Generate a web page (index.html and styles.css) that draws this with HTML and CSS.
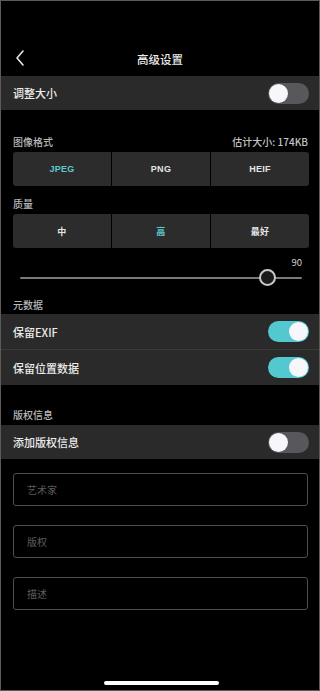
FILE: index.html
```html
<!DOCTYPE html>
<html lang="zh">
<head>
<meta charset="utf-8">
<link rel="stylesheet" href="styles.css">
</head>
<body>
<div class="screen">
  <div class="status"></div>
  <div class="nav">
    <svg class="back" width="12" height="18" viewBox="0 0 12 18"><path d="M9 2 L3 9 L9 16" fill="none" stroke="#e6e6e6" stroke-width="1.6" stroke-linecap="round" stroke-linejoin="round"/></svg>
    <div class="title">高级设置</div>
  </div>

  <div class="row"><span>调整大小</span><div class="toggle"><div class="knob"></div></div></div>

  <div class="label label-first"><span>图像格式</span><span class="est">估计大小: 174KB</span></div>
  <div class="seg">
    <div class="seg-item active">JPEG</div>
    <div class="seg-item">PNG</div>
    <div class="seg-item">HEIF</div>
  </div>

  <div class="label label-q"><span>质量</span></div>
  <div class="seg">
    <div class="seg-item">中</div>
    <div class="seg-item active">高</div>
    <div class="seg-item">最好</div>
  </div>

  <div class="slider">
    <div class="slider-value">90</div>
    <div class="track">
      <div class="thumb"></div>
    </div>
  </div>

  <div class="label label-meta"><span>元数据</span></div>
  <div class="group">
    <div class="row"><span>保留EXIF</span><div class="toggle on"><div class="knob"></div></div></div>
    <div class="row"><span>保留位置数据</span><div class="toggle on"><div class="knob"></div></div></div>
  </div>

  <div class="label label-copy"><span>版权信息</span></div>
  <div class="row"><span>添加版权信息</span><div class="toggle"><div class="knob"></div></div></div>

  <div class="inputs">
    <div class="input">艺术家</div>
    <div class="input">版权</div>
    <div class="input">描述</div>
  </div>

  <div class="home"></div>
</div>
</body>
</html>
```
FILE: styles.css
```css
* { box-sizing: border-box; }
html, body { margin: 0; padding: 0; background: #000; }
body { font-family: "Noto Sans CJK SC", "Noto Sans", sans-serif; }

.screen {
  width: 320px;
  height: 691px;
  border: 1px solid #5a5a5a;
  background: #000;
  color: #e8e8e8;
  display: flex;
  flex-direction: column;
  position: relative;
}

.status { height: 40px; }

.nav {
  height: 35px;
  display: flex;
  align-items: center;
  justify-content: center;
  position: relative;
}
.back { position: absolute; left: 13px; top: 8px; }
.title { font-size: 11.5px; font-weight: 500; color: #eaeaea; }

.row {
  height: 34px;
  background: #2a2a2a;
  display: flex;
  align-items: center;
  justify-content: space-between;
  padding: 0 10px 0 12px;
  font-size: 11px;
  font-weight: 500;
  color: #ececec;
}

.group { display: flex; flex-direction: column; gap: 1px; background: #3a3a3a; }
.group .row { height: 35px; }

.toggle {
  width: 41px;
  height: 21px;
  border-radius: 11px;
  background: #58585c;
  padding: 1px;
  display: flex;
  justify-content: flex-start;
}
.toggle .knob {
  width: 19px;
  height: 19px;
  border-radius: 50%;
  background: #f7f7fb;
}
.toggle.on { background: #54c8cf; justify-content: flex-end; }

.label {
  display: flex;
  justify-content: space-between;
  align-items: center;
  height: 14px;
  padding: 0 11px 0 12px;
  font-size: 10px;
  font-weight: 500;
  color: #b9b9b9;
}
.label .est { color: #c4c4c4; }
.label-first { margin-top: 24px; margin-bottom: 4px; }
.label-q { margin-top: 10px; margin-bottom: 4px; }
.label-meta { margin-top: 11px; margin-bottom: 3px; }
.label-copy { margin-top: 22px; margin-bottom: 4px; }

.seg {
  margin: 0 10px 0 12px;
  height: 34px;
  display: grid;
  grid-template-columns: 98px 98px 1fr;
  gap: 1px;
  border-radius: 3px;
  overflow: hidden;
}
.seg-item {
  background: #2c2c2c;
  display: flex;
  align-items: center;
  justify-content: center;
  font-family: "Liberation Sans", "Noto Sans CJK SC", sans-serif;
  font-size: 9px;
  font-weight: bold;
  color: #e4e4e4;
  letter-spacing: 0.3px;
}
.seg-item.active { color: #5ec8cf; }

.slider { display: flex; flex-direction: column; padding: 0 17px 0 19px; }
.slider-value {
  margin-top: 8px;
  height: 12px;
  line-height: 12px;
  text-align: right;
  font-size: 9.5px;
  color: #cfcfcf;
}
.track {
  height: 17px;
  margin-top: 1px;
  position: relative;
  display: flex;
  align-items: center;
}
.track::before {
  content: "";
  flex: 1;
  height: 2px;
  background: #7a7a7a;
  border-radius: 1px;
}
.thumb {
  position: absolute;
  left: 239px;
  top: 0;
  width: 17px;
  height: 17px;
  border-radius: 50%;
  border: 2px solid #c9c9c9;
  background: #1a1a1a;
}

.inputs {
  margin: 14px 11px 0 12px;
  display: flex;
  flex-direction: column;
  gap: 19px;
}
.input {
  height: 33px;
  border: 1.5px solid #4e4e4e;
  border-radius: 3px;
  padding: 0 13px;
  display: flex;
  align-items: center;
  font-size: 10px;
  color: #5c5c5c;
}

.home {
  position: absolute;
  left: 103px;
  bottom: 5px;
  width: 115px;
  height: 4px;
  border-radius: 2px;
  background: #fff;
}
```
